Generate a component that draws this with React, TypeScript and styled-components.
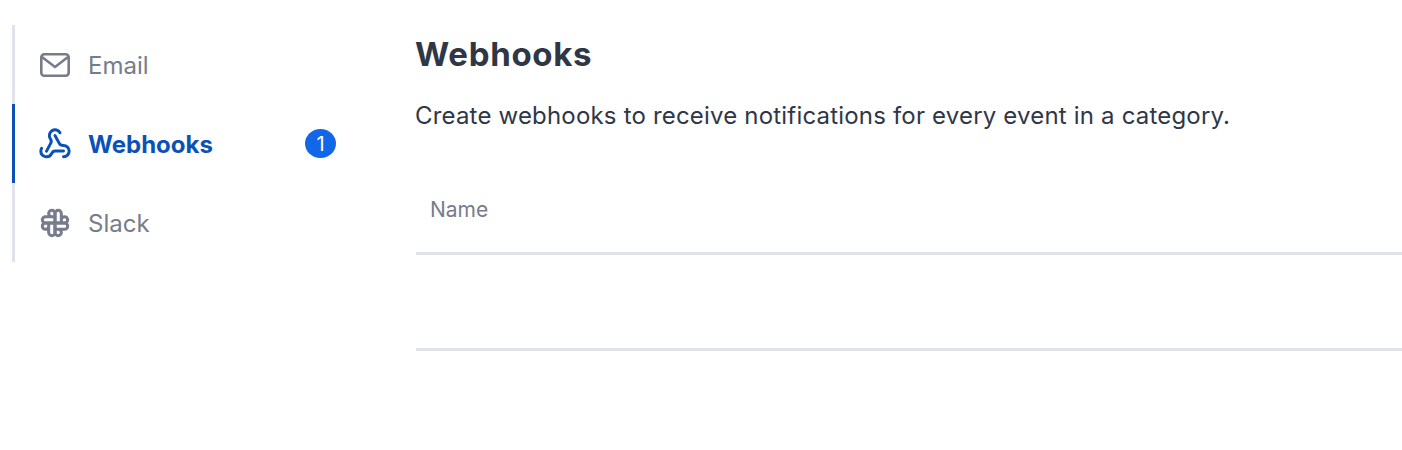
import React from "react";
import styled, { createGlobalStyle } from "styled-components";

const Global = createGlobalStyle`
  html, body { margin: 0; padding: 0; background: #fff; }
  body { font-family: Inter, "Noto Sans", sans-serif; }
`;

const Page = styled.div`
  display: flex;
  width: 1402px;
  height: 450px;
  overflow: hidden;
`;

const Sidebar = styled.nav`
  width: 324px;
  margin: 25px 0 0 12px;
  align-self: flex-start;
  display: flex;
  flex-direction: column;
  flex: none;
`;

const Item = styled.div<{ $active?: boolean }>`
  height: 79px;
  box-sizing: border-box;
  display: flex;
  align-items: center;
  border-left: 3px solid ${(p) => (p.$active ? "#0b52b8" : "#e2e2ea")};
  padding-left: 25px;
  color: ${(p) => (p.$active ? "#0b52b8" : "#767c8c")};
`;

const IconSlot = styled.span`
  width: 30px;
  height: 30px;
  margin-right: 18px;
  display: flex;
  align-items: center;
  justify-content: center;
  flex: none;

  svg {
    flex: none;
  }
`;

const Label = styled.span<{ $active?: boolean }>`
  flex: 1;
  font-size: 24px;
  line-height: 32px;
  padding-top: 2px;
  font-weight: ${(p) => (p.$active ? 700 : 400)};
`;

const Badge = styled.span`
  width: 31px;
  height: 29px;
  border-radius: 50%;
  background: #1267e8;
  color: #fff;
  font-size: 20px;
  display: flex;
  align-items: center;
  justify-content: center;
`;

const Main = styled.main`
  margin-left: 80px;
  flex: 1;
  padding-top: 28px;
`;

const Title = styled.h1`
  margin: 0 0 0 -1px;
  font-size: 33px;
  line-height: 52px;
  font-weight: 700;
  letter-spacing: 0.7px;
  color: #2f3747;
`;

const Desc = styled.p`
  margin: 10px 0 0 -1px;
  font-size: 24px;
  line-height: 52px;
  letter-spacing: 0.185px;
  color: #2f3747;
`;

const HeaderRow = styled.div`
  margin-top: 52px;
  height: 61px;
  box-sizing: border-box;
  padding: 0 14px;
  border-bottom: 3px solid #e2e2ea;
  display: flex;
  align-items: flex-start;
  font-size: 21px;
  line-height: 32px;
  color: #767c8c;
`;

const EmptyRow = styled.div`
  height: 96px;
  box-sizing: border-box;
  border-bottom: 3px solid #e2e2ea;
`;

const MailIcon = () => (
  <svg width="30" height="24" viewBox="0 0 30 24" fill="none" stroke="currentColor" strokeWidth="2.6" strokeLinecap="round" strokeLinejoin="round">
    <rect x="1.3" y="1.3" width="27.4" height="21.4" rx="3" />
    <path d="M2 4l13 10L28 4" />
  </svg>
);

const WebhookIcon = () => (
  <svg width="34" height="34" viewBox="0 0 24 24" fill="none" stroke="currentColor" strokeWidth="2.1" strokeLinecap="round" strokeLinejoin="round">
    <path d="M18 16.98h-5.99c-1.1 0-1.95.94-2.48 1.9A4 4 0 0 1 2 17c.01-.7.2-1.4.57-2" />
    <path d="m6 17 3.13-5.78c.53-.97.1-2.18-.5-3.1a4 4 0 1 1 6.89-4.06" />
    <path d="m12 6 3.13 5.73C15.66 12.7 16.9 13 18 13a4 4 0 0 1 0 8" />
  </svg>
);

const SlackIcon = () => (
  <svg width="38" height="38" viewBox="0 0 24 24" fill="none" stroke="currentColor" strokeWidth="1.9" strokeLinecap="round" strokeLinejoin="round">
    <path d="M12 12V6a2 2 0 0 1 4 0v6m0-2a2 2 0 1 1 2 2h-6" />
    <path d="M12 12h6a2 2 0 0 1 0 4h-6m2 0a2 2 0 1 1-2 2v-6" />
    <path d="M12 12v6a2 2 0 0 1-4 0v-6m0 2a2 2 0 1 1-2-2h6" />
    <path d="M12 12H6a2 2 0 0 1 0-4h6m-2 0a2 2 0 1 1 2-2v6" />
  </svg>
);

export default function App() {
  return (
    <Page>
      <Global />
      <Sidebar>
        <Item>
          <IconSlot><MailIcon /></IconSlot>
          <Label>Email</Label>
        </Item>
        <Item $active>
          <IconSlot><WebhookIcon /></IconSlot>
          <Label $active>Webhooks</Label>
          <Badge>1</Badge>
        </Item>
        <Item>
          <IconSlot><SlackIcon /></IconSlot>
          <Label>Slack</Label>
        </Item>
      </Sidebar>
      <Main>
        <Title>Webhooks</Title>
        <Desc>Create webhooks to receive notifications for every event in a category.</Desc>
        <HeaderRow>Name</HeaderRow>
        <EmptyRow />
      </Main>
    </Page>
  );
}
